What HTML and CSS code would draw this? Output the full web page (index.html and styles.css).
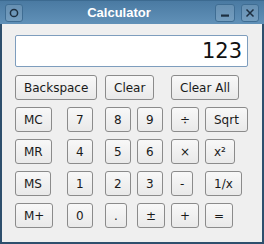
FILE: index.html
```html
<!DOCTYPE html>
<html>
<head>
<meta charset="utf-8">
<link rel="stylesheet" href="styles.css">
</head>
<body>
<div class="window">
  <div class="titlebar">
    <div class="tbtn"><svg width="10" height="10" viewBox="0 0 10 10"><circle cx="5" cy="5" r="3.6" fill="none" stroke="#1d2f40" stroke-width="1.5"/></svg></div>
    <div class="title">Calculator</div>
    <div class="tbtn min"><svg width="10" height="10" viewBox="0 0 10 10"><rect x="1" y="6.5" width="8" height="2.2" fill="#1d2f40"/></svg></div>
    <div class="tbtn"><svg width="10" height="10" viewBox="0 0 10 10"><path d="M1.5 1.5 L8.5 8.5 M8.5 1.5 L1.5 8.5" stroke="#1d2f40" stroke-width="1.5"/></svg></div>
  </div>
  <div class="content">
    <div class="display">123</div>
    <div class="grid">
      <button class="btn span2">Backspace</button>
      <button class="btn span2">Clear</button>
      <button class="btn span2">Clear All</button>

      <button class="btn">MC</button>
      <button class="btn">7</button>
      <button class="btn">8</button>
      <button class="btn">9</button>
      <button class="btn">÷</button>
      <button class="btn">Sqrt</button>

      <button class="btn">MR</button>
      <button class="btn">4</button>
      <button class="btn">5</button>
      <button class="btn">6</button>
      <button class="btn">×</button>
      <button class="btn">x²</button>

      <button class="btn">MS</button>
      <button class="btn">1</button>
      <button class="btn">2</button>
      <button class="btn">3</button>
      <button class="btn">-</button>
      <button class="btn">1/x</button>

      <button class="btn">M+</button>
      <button class="btn">0</button>
      <button class="btn">.</button>
      <button class="btn">±</button>
      <button class="btn">+</button>
      <button class="btn">=</button>
    </div>
  </div>
</div>
</body>
</html>
```
FILE: styles.css
```css
html, body {
  margin: 0;
  padding: 0;
  background: #efefef;
}
.window {
  width: 264px;
  height: 244px;
  display: flex;
  flex-direction: column;
  font-family: "DejaVu Sans", sans-serif;
}
.titlebar {
  height: 24px;
  flex: none;
  display: flex;
  align-items: center;
  padding: 0 5px 0 5px;
  box-sizing: border-box;
  background: linear-gradient(#4a7aa2, #6191b8);
  border-top: 1px solid #3c6a90;
}
.title {
  flex: 1;
  text-align: center;
  color: #ffffff;
  font-family: "Liberation Sans", Arial, sans-serif;
  font-weight: bold;
  font-size: 13px;
}
.tbtn {
  width: 18px;
  height: 18px;
  box-sizing: border-box;
  border: 1px solid #3f6d93;
  border-radius: 3px;
  background: rgba(255,255,255,0.14);
  display: flex;
  align-items: center;
  justify-content: center;
}
.tbtn.min {
  width: 20px;
  margin-right: 6px;
}
.content {
  flex: 1;
  background: #efefef;
  border: 2px solid #2e4f6d;
  border-top: none;
  padding: 11px 13px 0 13px;
}
.display {
  height: 32px;
  width: 233px;
  box-sizing: border-box;
  background: #ffffff;
  border: 1px solid #7e9dbd;
  border-radius: 2px;
  font-size: 21px;
  line-height: 30px;
  text-align: right;
  padding-right: 5px;
  color: #111;
}
.grid {
  margin-top: 8px;
  display: grid;
  grid-template-columns: 52px 38px 32px 34px 34px 44px;
  grid-auto-rows: 25px;
  row-gap: 7px;
  justify-items: start;
}
.btn {
  height: 25px;
  box-sizing: border-box;
  padding: 0 8px;
  border: 1px solid #8b8b8b;
  border-radius: 3px;
  background: linear-gradient(#f8f8f8, #e9e9e9);
  font-family: "DejaVu Sans", sans-serif;
  font-size: 12px;
  color: #1a1a1a;
  margin: 0;
}
.span2 {
  grid-column: span 2;
}
```
